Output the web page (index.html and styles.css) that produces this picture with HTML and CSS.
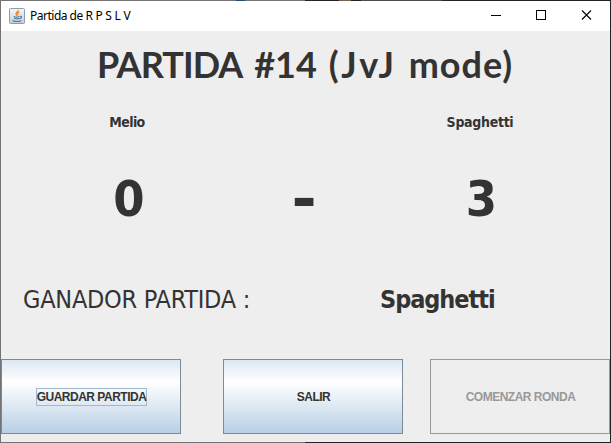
FILE: index.html
```
<!DOCTYPE html>
<html lang="es">
<head>
<meta charset="utf-8">
<title>Partida de R P S L V</title>
<link rel="stylesheet" href="styles.css">
</head>
<body>
<div class="window">
  <header class="titlebar">
    <svg class="java" width="16" height="16" viewBox="0 0 16 16">
      <defs><linearGradient id="tile" x2="0" y2="1"><stop offset="0" stop-color="#f5f7f8"/><stop offset="1" stop-color="#c6ced4"/></linearGradient></defs>
      <rect x=".5" y=".5" width="15" height="15" rx="1" fill="url(#tile)" stroke="#8b9dab"/>
      <path d="M9.2 1.8c.5 2-3.4 2.7-2 4.8l.7 1.1M10.5 4c-2.3 1-2.1 1.8-1.2 3.2" fill="none" stroke="#e67e22" stroke-width="1.2"/>
      <path d="M4.6 8.5c1.3.6 4.6.6 6 0M5 10.3c1.5.6 4 .6 5.3 0M11 8.3c2.3-.3 2 2-.4 2.4M3.5 12.6c2.5 1 6.5 1 8.8 0" fill="none" stroke="#4d7fa8" stroke-width="1.2"/>
    </svg>
    <span class="caption">Partida de <span class="initials">R P S L V</span></span>
    <svg class="controls" width="138" height="30" viewBox="0 0 138 30" fill="none" stroke="#000">
      <path d="M19 14.5h10"/>
      <rect x="64.5" y="9.5" width="9" height="9"/>
      <path d="M110 9.5l9 9M119 9.5l-9 9" stroke-width="1.1"/>
    </svg>
  </header>
  <main>
    <h1><span class="word">PARTIDA</span> <span>#14</span> <span class="mode">(JvJ</span> <span class="mode-name">mode)</span></h1>
    <div class="row players"><span class="p1">Melio</span><span></span><span class="p2">Spaghetti</span></div>
    <div class="row score"><span class="points">0</span><span class="dash">-</span><span>3</span></div>
    <div class="result"><span class="label">GANADOR PARTIDA :</span><span class="winner">Spaghetti</span></div>
    <div class="buttons">
      <button class="focused"><span>GUARDAR PARTIDA</span></button>
      <button><span>SALIR</span></button>
      <button disabled><span>COMENZAR RONDA</span></button>
    </div>
  </main>
</div>
</body>
</html>
```
FILE: styles.css
```
* { box-sizing: border-box; }
body {
  margin: 0;
  width: 611px;
  height: 443px;
  overflow: hidden;
  padding: 1px;
  background:
    linear-gradient(90deg, transparent 236px, #244878 236px 245px, transparent 245px 339px, #75664a 339px 351px, transparent 351px 361px, #514a53 361px 442px, transparent 442px) 0 0 / 100% 1px no-repeat,
    linear-gradient(90deg, #747273 305px, #242224 305px);
}
.window { height: 441px; background: #eee; color: #333; }
.titlebar { display: flex; align-items: center; height: 30px; padding-left: 8px; background: #fff; }
.java { display: block; }
.caption { margin: -2px 0 0 5px; font: 12px "Noto Sans", sans-serif; color: #000; letter-spacing: -.5px; white-space: nowrap; }
.initials { letter-spacing: -.25px; }
.controls { margin-left: auto; display: block; }
h1 { margin: 0; height: 69px; padding-left: 96px; font: bold 36px/66px Lato, sans-serif; word-spacing: 3px; white-space: nowrap; }
.word { letter-spacing: -.9px; }
.mode { letter-spacing: 2.8px; }
.mode-name { letter-spacing: 1px; }
.row { display: grid; grid-template-columns: 254px 98px 257px; text-align: center; white-space: nowrap; }
.players { height: 44px; font: bold 14px/44px "DejaVu Sans Condensed", "DejaVu Sans", sans-serif; }
.p1 { letter-spacing: -.6px; padding-right: 2px; }
.p2 { letter-spacing: -.3px; padding-right: 3px; }
.score { height: 111px; font: bold 50px/111px "DejaVu Sans Condensed", "DejaVu Sans", sans-serif; }
.points { padding-left: 2px; }
.dash { transform: scale(1.35, 1.15); }
.result { display: grid; grid-template-columns: 357px 1fr; height: 104px; padding-left: 22px; font: 25px/90px "DejaVu Sans Condensed", "DejaVu Sans", sans-serif; white-space: nowrap; }
.label { letter-spacing: -.25px; }
.winner { font-weight: bold; letter-spacing: -1.05px; }
.buttons { display: grid; grid-template-columns: 222px 207px 180px; height: 75px; }
button {
  width: 180px;
  height: 75px;
  padding: 0 0 0 1px;
  border: 1px solid #7a8a99;
  border-radius: 0;
  background: linear-gradient(#dde8f3, #fff 30%, #b8cfe5);
  color: #333;
  font: bold 12px/16px "Liberation Sans", Arial, sans-serif;
  letter-spacing: -.5px;
  white-space: nowrap;
}
.focused span { display: inline-block; border: 1px solid #a3b8cc; }
button:disabled { border-color: #999; background: #eee; color: #999; }
```
